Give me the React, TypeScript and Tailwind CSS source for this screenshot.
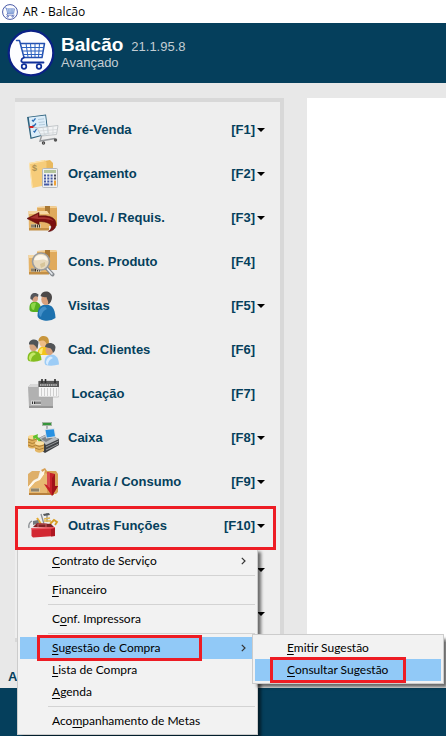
import React from 'react';

interface IconProps {
  className?: string;
}

function CartLogo({ className }: IconProps) {
  return (
    <svg viewBox="0 0 48 48" className={className} aria-hidden="true">
      <circle cx="24" cy="24" r="22.3" fill="#fdfdff" stroke="#0a2086" strokeWidth="2.2" />
      <g fill="none" stroke="#2450b0" strokeWidth="1.500" strokeLinejoin="round" strokeLinecap="round">
        <path d="M9.500 11.500H12.500L17 28.500H35L37.500 14.500H14" />
        <path d="M17 28.500C13.500 30 13.500 33.500 16.500 33.500H36.500" stroke="#10309a" strokeWidth="1.800" />
      </g>
      <path d="M14.500 18.500H36.500M15.500 22H36M16.500 25.500H35.500M19 14.500L21 28M23.500 14.500L24.500 28M28 14.500V28M32.500 14.500L31.500 28" stroke="#2c62c0" strokeWidth="1" fill="none" />
      <circle cx="17" cy="37.500" r="2.300" fill="#fff" stroke="#10309a" strokeWidth="1.700" />
      <circle cx="32" cy="37.500" r="2.300" fill="#fff" stroke="#10309a" strokeWidth="1.700" />
    </svg>);
}

function Boxes() {
  return (
    <>
      <path d="M10 5L29 4L30 6V24H11Z" fill="#e0aa5c" />
      <path d="M10 5L29 4L30 6H10Z" fill="#f2cf94" />
      <path d="M18 4H23V12L20.500 10.500L18 12Z" fill="#a97834" />
      <path d="M1.500 9H20L22 12V28H2Z" fill="#e6b468" />
      <path d="M1.500 9H20L22 12H2Z" fill="#f5d7a2" />
      <path d="M2 26H22V28.500H2Z" fill="#c38f45" />
      <rect x="4" y="22" width="10" height="4" fill="#d9c7a2" />
      <path d="M5 22.500V25.500M7 22.500V25.500M8.500 22.500V25.500M10.500 22.500V25.500M12.500 22.500V25.500" stroke="#3c3730" strokeWidth="1" />
    </>);
}

function PreVendaIcon({ className }: IconProps) {
  return (
    <svg viewBox="0 0 32 32" className={className} aria-hidden="true">
      <path d="M0 3L19 .5L21.500 20L3.500 25Z" fill="#2c617d" />
      <path d="M1.800 3.500L18.300 1.500L20.500 19.500L4.500 23.500Z" fill="#dcedf9" />
      <path d="M5 6L6.200 7.200L8.500 4.300M5.600 11L6.800 12.200L9 9.500M6.500 17L7.600 18L9.500 15" stroke="#2b6cb4" strokeWidth="1.300" fill="none" />
      <path d="M11 5.500L17 4.800M11.500 8.500L17.500 7.800M12 11L18 10.400" stroke="#b3cbdc" strokeWidth="1" />
      <path d="M2.500 13H6.500" stroke="#d42424" strokeWidth="2" />
      <path d="M7 13L10 14L14.500 22L29.500 20.500L31 11.500L10 14Z" fill="#f2f4f5" fillOpacity=".8" stroke="#b8bcc0" strokeWidth=".8" />
      <path d="M12 17L30 15.500M13.500 20L29.500 18.500M16 14L18 22M21 13L22 21M26 12.500V21" stroke="#cfd2d5" strokeWidth=".7" />
      <path d="M14.500 22L13 27L28 24.500" stroke="#96999c" strokeWidth="1.400" fill="none" />
      <circle cx="16.500" cy="29" r="1.700" fill="#444" />
      <circle cx="28.500" cy="26" r="1.700" fill="#555" />
      <circle cx="16.500" cy="29" r=".6" fill="#ccc" />
    </svg>);
}

function OrcamentoIcon({ className }: IconProps) {
  return (
    <svg viewBox="0 0 32 32" className={className} aria-hidden="true">
      <path d="M17 3L23 2L26 5V24H18Z" fill="#e9b95e" />
      <path d="M2 5L17.500 2L19.500 4V27L5 30Z" fill="#f6cc7a" />
      <path d="M2 5L17.500 2V3.200L3 6L5.800 29.500L5 30Z" fill="#fde6b2" />
      <text x="5" y="13" fontSize="9" fontFamily="Liberation Sans, sans-serif" fill="#ae9152">$</text>
      <rect x="15.500" y="10.500" width="15" height="19" rx="1" fill="#eef0f2" stroke="#b5b9bd" />
      <rect x="17" y="12" width="12" height="3" fill="#b3c49b" />
      <g fill="#4559a4">
        <path d="M17 16.500H19V18.500H17ZM20.300 16.500H22.300V18.500H20.300ZM23.600 16.500H25.600V18.500H23.600ZM17 19.500H19V21.500H17ZM20.300 19.500H22.300V21.500H20.300ZM23.600 19.500H25.600V21.500H23.600ZM17 22.500H19V24.500H17ZM20.300 22.500H22.300V24.500H20.300ZM23.600 22.500H25.600V24.500H23.600ZM17 25.500H22.300V27.500H17Z" />
      </g>
      <path d="M27 16.500H29V18.500H27ZM27 19.500H29V21.500H27ZM23.600 25.500H25.600V27.500H23.600Z" fill="#4a4b58" />
      <rect x="27" y="22.500" width="2" height="5" fill="#efa238" />
    </svg>);
}

function DevolucaoIcon({ className }: IconProps) {
  return (
    <svg viewBox="0 0 32 32" className={className} aria-hidden="true">
      <Boxes />
      <path d="M0 16.500L12 10.500V14C22 13 29 15.500 29 22C29 26.500 26 29 21.500 29.500C27 25.500 25 19.500 12 19.500V22.500Z" fill="#7c1010" stroke="#520808" strokeWidth=".6" />
      <path d="M3 16L11 12V15.500C18 15 24 15.500 26.500 19C22 16.800 17 16.800 11 17Z" fill="#a83431" />
    </svg>);
}

function ConsultaIcon({ className }: IconProps) {
  return (
    <svg viewBox="0 0 32 32" className={className} aria-hidden="true">
      <Boxes />
      <path d="M19.500 22L25.500 28.500" stroke="#868b90" strokeWidth="4" strokeLinecap="round" />
      <path d="M20 22.500L25 28" stroke="#e8ebee" strokeWidth="1.600" strokeLinecap="round" />
      <circle cx="14" cy="15.500" r="8.500" fill="#e8dec8" fillOpacity=".9" stroke="#9b9d9f" strokeWidth="1.600" />
      <path d="M7 14C8 10 11 8.500 15 9C20 10 21 13 20.500 15C15 11.500 11 15.500 7 14Z" fill="#fffdf5" fillOpacity=".8" />
      <path d="M13 18L18 16V20L14 22Z" fill="#d7c59a" />
    </svg>);
}

function VisitasIcon({ className }: IconProps) {
  return (
    <svg viewBox="0 0 32 32" className={className} aria-hidden="true">
      <path d="M2.500 20C2 14 4 12 7.500 11.500C11 12 14 13 14.500 22H6Q3 22 2.500 20Z" fill="#58b020" />
      <path d="M4 14.500Q6 12 9 13L7 20Q4 20 4 14.500Z" fill="#8fd748" />
      <ellipse cx="7.800" cy="8" rx="3.200" ry="4" fill="#d6a283" />
      <path d="M3.500 9C2.500 2.500 9 1.500 11.500 4.500L11 7C9 5.500 6.500 6 5.500 10Z" fill="#54565b" />
      <path d="M10.500 26C10.500 17 14 15 19 14.500C25 15 28 18 28.500 28Q24 31.500 17 30.500Q11 29 10.500 26Z" fill="#1d71ae" />
      <path d="M12 22Q13 17 18 16.500L20 19Q15 21 14 27Q11.500 26 12 22Z" fill="#4490c8" />
      <ellipse cx="19" cy="9.500" rx="4.700" ry="5.500" fill="#d8a07c" />
      <path d="M13.500 6C15 -.5 24.500 .5 25 7C25 11 22.500 14.500 21 14C22 11 19.500 9 19.500 7C17.500 7.500 15 7 13.500 6Z" fill="#4b4848" />
    </svg>);
}

function ClientesIcon({ className }: IconProps) {
  return (
    <svg viewBox="0 0 32 32" className={className} aria-hidden="true">
      <path d="M10.500 20C10.500 15 13 12.500 17 12.500C21 13 24 15 24 21H12Z" fill="#f2c51a" />
      <path d="M12 18Q13 14 16 14L15 20H12Z" fill="#fbea75" />
      <ellipse cx="16.500" cy="8" rx="4.200" ry="5.300" fill="#edbd85" />
      <path d="M11.500 8C11 .5 20 .5 21.500 5C22.500 9 21.500 12.500 20 13C20 8.500 17.500 6 15 6.500Q12 6.500 11.500 8Z" fill="#c8963d" />
      <path d="M.5 25C.5 19 3 17.500 7 17C12 17.500 14 19.500 14.500 26Q8 29 1.500 27Z" fill="#84bd20" />
      <path d="M2 23Q3 18.500 7 18.500L9 20Q4 22 4 27Q1.500 26 2 23Z" fill="#c5e968" />
      <ellipse cx="6.500" cy="12.500" rx="4" ry="4.800" fill="#d5a580" />
      <path d="M2 10.500C1.500 4.500 10.500 4 11.500 8.500L10.500 15C9 13 8 10.500 5.500 10.500Z" fill="#4f5457" />
      <path d="M17.500 29C17.500 23 20 21 24.500 20.500C29.500 21 31.500 24 32 30.500Q25 32.500 18.500 31Z" fill="#9cccf6" />
      <path d="M19 28Q20 23 24 22.500L26 24Q21 26 21 31Q18.500 30 19 28Z" fill="#d8edff" />
      <ellipse cx="22.500" cy="16.500" rx="4" ry="4.700" fill="#d9a27c" />
      <path d="M18 13C18.500 7.500 28 8 28.500 13.500Q28.500 17 26 19C25.500 16 24 14 22 14Z" fill="#525457" />
    </svg>);
}

function LocacaoIcon({ className }: IconProps) {
  return (
    <svg viewBox="0 0 32 32" className={className} aria-hidden="true">
      <path d="M1 9L4 6H26V29H2Z" fill="#b1b1b1" />
      <path d="M1 9L4 6H12V9Z" fill="#d8d8d8" />
      <path d="M2 28H26V30H2Z" fill="#959595" />
      <rect x="4" y="22.500" width="10" height="4.500" fill="#d8d8d8" />
      <path d="M5.500 23.500V26M7.500 23.500V26M9 23.500V26M11 23.500V26M13 23.500V26" stroke="#333" strokeWidth="1" />
      <rect x="11.500" y="3" width="20.500" height="16" rx="1" fill="#f5f5f5" stroke="#aaa" strokeWidth=".6" />
      <path d="M11.500 3H32V9H11.500Z" fill="#585858" />
      <path d="M15 1V5M18.500 1V5M28 1V5" stroke="#303030" strokeWidth="1.600" />
      <path d="M13 7H30.500" stroke="#c9c9c9" strokeWidth="1.500" strokeDasharray="1.500 .7" />
      <path d="M14.500 10V18M17.500 10V18M20.500 10V18M23.500 10V18M26.500 10V18M29.500 10V18" stroke="#c5c5c5" strokeWidth=".8" />
    </svg>);
}

function CaixaIcon({ className }: IconProps) {
  return (
    <svg viewBox="0 0 32 32" className={className} aria-hidden="true">
      <rect x="15" y="0" width="10" height="4" fill="#a5b5a2" />
      <rect x="16" y="1" width="8" height="2" fill="#36953b" />
      <path d="M20 4V10" stroke="#9c9fa2" strokeWidth="1.500" />
      <path d="M12 16L20 12L32 17V23L18 31L12 27Z" fill="#3e4144" />
      <path d="M12 16L20 12L32 17L19 23Z" fill="#b9bdc1" />
      <path d="M14 17L20 14L26 16L19 20Z" fill="#7d8286" />
      <path d="M19 25L31.500 19M19 28L31.500 22" stroke="#94979a" strokeWidth="1" />
      <path d="M17.500 7L27.500 6L29 15L19 16.500Z" fill="#dce2e6" />
      <path d="M18.500 8L26.800 7.200L28 14.200L19.800 15.400Z" fill="#2791e2" />
      <path d="M1 15Q5 12 10 15V25Q5 28 1 25Z" fill="#e0b05c" />
      <path d="M1 17Q5 20 10 17M1 20Q5 23 10 20M1 23Q5 26 10 23" stroke="#a87932" strokeWidth=".9" fill="none" />
      <ellipse cx="5.500" cy="15" rx="4.500" ry="2" fill="#f8d992" />
      <path d="M8 21Q12 18 17 21V29Q12 32.500 8 29Z" fill="#e4b766" />
      <path d="M8 23Q12 26 17 23M8 26Q12 29 17 26" stroke="#a87932" strokeWidth=".9" fill="none" />
      <ellipse cx="12.500" cy="21" rx="4.500" ry="2" fill="#fae1a4" />
      <path d="M6 14L11 12L10.500 14.500L14 18L12 19.500L8.500 16L6.500 17.500Z" fill="#5fc02f" />
    </svg>);
}

function AvariaIcon({ className }: IconProps) {
  return (
    <svg viewBox="0 0 32 32" className={className} aria-hidden="true">
      <path d="M1 8L5 5H13L11 12L7 14L1 21Z" fill="#deaf69" />
      <path d="M14 4L18 2L20 5H29L31 8V26L29 28H14V14L18 9Z" fill="#d8a055" />
      <path d="M2 22L8 16L13 13L18 7L20 8V28H2Z" fill="#e7b971" />
      <path d="M2 27H27V29H2Z" fill="#b7803c" />
      <path d="M1 21L6 15L11 13L14 7L18 4L17 8L13 14L8 16L2 23Z" fill="#fff7e7" />
      <rect x="4" y="22" width="9" height="4" fill="#dccaa4" />
      <path d="M5 22.500V25.500M7 22.500V25.500M9 22.500V25.500M11 22.500V25.500" stroke="#443c30" strokeWidth="1" />
      <path d="M20 6L28 8V20H31L25 30L17 18L20 19Z" fill="#c62028" />
      <path d="M20 6L23 7V22L21 20.500L20 19Z" fill="#d8494e" />
      <path d="M28 8V20H31L25 30V12Z" fill="#a01218" />
    </svg>);
}

function OutrasIcon({ className }: IconProps) {
  return (
    <svg viewBox="0 0 32 32" className={className} aria-hidden="true">
      <path d="M2 18Q1 13 5 11M14 4L17 14M20 3V12" fill="none" stroke="#8a8e92" strokeWidth="1.300" />
      <path d="M10 8L14 14" stroke="#e4aa30" strokeWidth="2" />
      <path d="M16 4L22 3L23 5L17 6Z" fill="#55595d" />
      <path d="M17 9L23 8M17 11H24" stroke="#e1b54b" strokeWidth="1.400" />
      <path d="M23 14L27 10L30 12L28 15" fill="none" stroke="#d79d25" strokeWidth="1.800" />
      <path d="M6 11L11 10L12 13L6 15Z" fill="#75797d" />
      <path d="M6 17L10 13L24 14L27 17Z" fill="#7e2326" />
      <path d="M4.500 18L28 17V26L6 27.500L4.500 26Z" fill="#d22832" />
      <path d="M4.500 18L28 17V18.500L4.500 19.500Z" fill="#ec5a62" />
      <path d="M24 19L28 18V26L24 26.500Z" fill="#ae1721" />
      <path d="M11 17V14H19V17" stroke="#bd5556" strokeWidth="1.200" fill="none" />
    </svg>);
}

const sidebarItems = [
{ label: 'Pré-Venda', shortcut: '[F1]', icon: PreVendaIcon, arrow: true },
{ label: 'Orçamento', shortcut: '[F2]', icon: OrcamentoIcon, arrow: true },
{ label: 'Devol. / Requis.', shortcut: '[F3]', icon: DevolucaoIcon, arrow: true },
{ label: 'Cons. Produto', shortcut: '[F4]', icon: ConsultaIcon, arrow: false },
{ label: 'Visitas', shortcut: '[F5]', icon: VisitasIcon, arrow: true },
{ label: 'Cad. Clientes', shortcut: '[F6]', icon: ClientesIcon, arrow: false },
{ label: ' Locação', shortcut: '[F7]', icon: LocacaoIcon, arrow: false },
{ label: 'Caixa', shortcut: '[F8]', icon: CaixaIcon, arrow: true },
{ label: ' Avaria / Consumo', shortcut: '[F9]', icon: AvariaIcon, arrow: true }];

function DropArrow() {
  return (
    <svg viewBox="0 0 8 4" className="w-2 h-1" aria-hidden="true">
      <path d="M0 0H8L4 4Z" fill="#000" />
    </svg>);
}

interface SidebarButtonProps {
  label: string;
  shortcut: string;
  icon: React.ComponentType<IconProps>;
  arrow: boolean;
}

function SidebarButton({ label, shortcut, icon: Icon, arrow }: SidebarButtonProps) {
  return (
    <button
      type="button"
      className="w-full h-11 pl-3 pr-[15px] flex items-center text-left text-[13px] font-bold whitespace-pre">
      <Icon className="w-8 h-8 mr-[9px] shrink-0" />
      <span className="flex-1">{label}</span>
      <span>{shortcut}</span>
      <span className="w-2 ml-0.5">{arrow && <DropArrow />}</span>
    </button>);
}

interface MenuItemProps {
  // text before, on and after the underlined access key
  text: [string, string, string];
  active?: boolean;
  submenu?: boolean;
}

function MenuItem({ text, active = false, submenu = false }: MenuItemProps) {
  return (
    <button
      type="button"
      role="menuitem"
      className={`w-full h-[22px] pl-8 pr-[9px] flex items-center justify-between text-left whitespace-nowrap ${active ? 'bg-[#91c9f7]' : ''}`}>
      <span>
        {text[0]}<span className="underline underline-offset-2">{text[1]}</span>{text[2]}
      </span>
      {submenu &&
      <svg viewBox="0 0 5 8" className="w-[5px] h-2" aria-hidden="true">
          <path d="M.8 .8L4 4L.8 7.200" fill="none" stroke="#333" strokeWidth="1.200" />
        </svg>
      }
    </button>);
}

function Separator() {
  return <div role="separator" className="h-px my-[3px] ml-7 bg-[#d3d3d3]" />;
}

function Highlight({ className }: IconProps) {
  return <div className={`absolute z-30 border-[3px] border-[#ed1c24] pointer-events-none ${className}`} />;
}

const menuPanel = "absolute border border-[#cccccc] bg-[#f2f2f2] p-0.5 text-[12px] font-normal text-black font-['Lato','Open_Sans',sans-serif] shadow-[4px_4px_3px_-1px_rgba(0,0,0,0.55)]";

function FuncoesMenu() {
  return (
    <div role="menu" className={`${menuPanel} left-0.5 top-[43px] w-[241px] z-10`}>
      <MenuItem text={['', 'C', 'ontrato de Serviço']} submenu />
      <Separator />
      <MenuItem text={['', 'F', 'inanceiro']} />
      <Separator />
      <MenuItem text={['C', 'o', 'nf. Impressora']} />
      <Separator />
      <div className="relative">
        <MenuItem text={['', 'S', 'ugestão de Compra']} active submenu />
        <Highlight className="left-[17px] right-[53px] -top-0.5 -bottom-0.5" />
        <div role="menu" className={`${menuPanel} left-[232px] -top-[3px] w-[192px] z-20`}>
          <MenuItem text={['', 'E', 'mitir Sugestão']} />
          <div className="relative">
            <MenuItem text={['', 'C', 'onsultar Sugestão']} active />
            <Highlight className="left-[15px] right-[35px] -top-0.5 -bottom-0.5" />
          </div>
        </div>
      </div>
      <MenuItem text={['', 'L', 'ista de Compra']} />
      <MenuItem text={['', 'A', 'genda']} />
      <Separator />
      <MenuItem text={['Aco', 'm', 'panhamento de Metas']} />
    </div>);
}

export default function App() {
  return (
    <div className="min-h-screen flex flex-col overflow-hidden bg-[#e8e8e8] font-['Liberation_Sans',Arial,sans-serif] text-[#053f5c]">
      <div className="h-[23px] bg-white flex items-center gap-[5px] pl-0.5 text-[12px] text-black font-['Open_Sans',sans-serif]">
        <CartLogo className="w-4 h-4" />
        <span>AR - Balcão</span>
      </div>

      <header className="h-[60px] bg-[#053f5c] flex items-center gap-[6px] pl-[7px]">
        <CartLogo className="w-12 h-12" />
        <div>
          <h1 className="flex items-baseline gap-2 text-[19px] leading-[18px] text-white">
            <span className="font-bold">Balcão</span>
            <span className="text-[13px] text-[#c3cdd3]">21.1.95.8</span>
          </h1>
          <p className="text-[13px] leading-[14px] text-[#c3cdd3]">Avançado</p>
        </div>
      </header>

      <main className="flex gap-[23px] pl-[15px] pt-[15px]">
        <aside className="w-[269px] shrink-0 bg-[#eeeeee] border-y-4 border-r-4 border-[#d8d8d8] pt-1.5 pb-0.5">
          {sidebarItems.map((item) =>
          <SidebarButton key={item.shortcut} {...item} />
          )}
          <div className="relative">
            <SidebarButton label="Outras Funções" shortcut="[F10]" icon={OutrasIcon} arrow />
            <Highlight className="left-0 right-1 top-0.5 -bottom-0.5" />
            <FuncoesMenu />
          </div>
          {/* entries behind the open menu */}
          <div className="h-11 pr-[15px] flex items-center justify-end"><DropArrow /></div>
          <div className="h-11 pr-[15px] flex items-center justify-end"><DropArrow /></div>
        </aside>
        <section className="flex-1 bg-white" />
      </main>

      <div className="h-[46px] pl-2 pb-0.5 flex items-end text-[13px] font-bold">A</div>
      <footer className="flex-1 min-h-12 bg-[#053f5c]" />
    </div>);
}
